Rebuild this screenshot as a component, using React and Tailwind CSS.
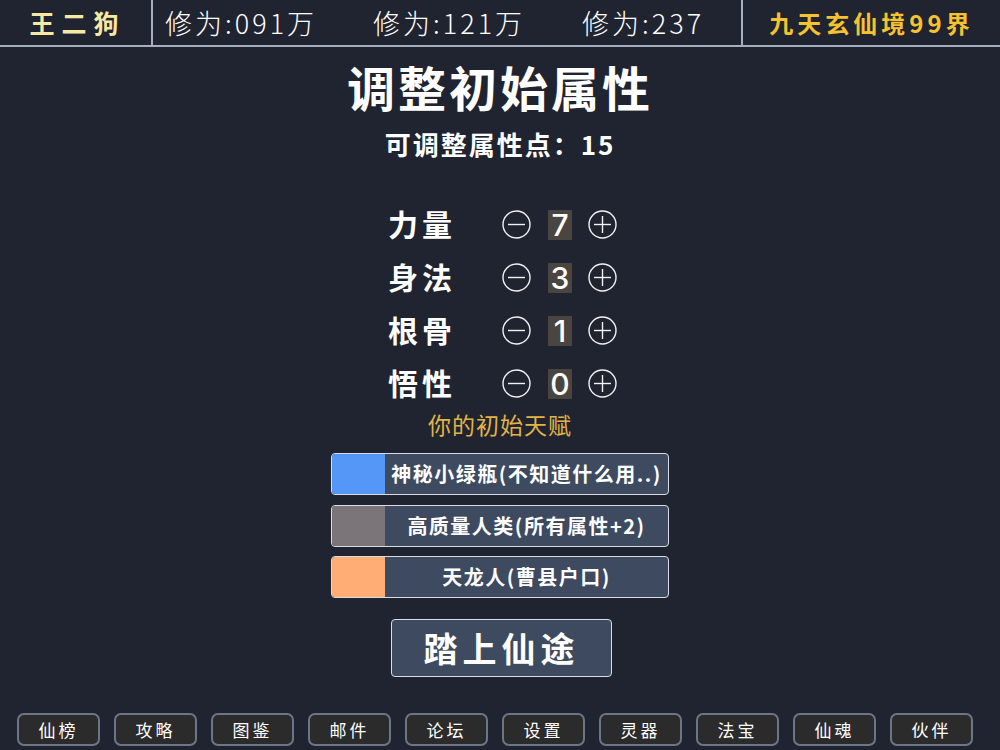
const stats = ['修为:091万', '修为:121万', '修为:237'];

const attrs = [
  { name: '力量', value: 7 },
  { name: '身法', value: 3 },
  { name: '根骨', value: 1 },
  { name: '悟性', value: 0 },
];

const talents = [
  { color: 'bg-[#5597f7]', text: '神秘小绿瓶(不知道什么用..)' },
  { color: 'bg-[#7b7579]', text: '高质量人类(所有属性+2)' },
  { color: 'bg-[#ffad75]', text: '天龙人(曹县户口)' },
];

const navs = ['仙榜', '攻略', '图鉴', '邮件', '论坛', '设置', '灵器', '法宝', '仙魂', '伙伴'];

function CircleBtn({ plus }) {
  return (
    <svg width="29" height="29" viewBox="0 0 29 29" className="shrink-0">
      <circle cx="14.5" cy="14.5" r="13.5" fill="none" stroke="#f2f2f2" strokeWidth="1.4" />
      <line x1="6" y1="14.5" x2="23" y2="14.5" stroke="#f2f2f2" strokeWidth="1.4" />
      {plus && <line x1="14.5" y1="6" x2="14.5" y2="23" stroke="#f2f2f2" strokeWidth="1.4" />}
    </svg>
  );
}

export default function App() {
  return (
    <div className="w-[1000px] h-[750px] overflow-hidden bg-[#1f2430] text-white flex flex-col font-['Noto_Sans_CJK_SC','Noto_Sans',sans-serif]">
      {/* top bar */}
      <div className="h-[47px] shrink-0 flex border-b-2 border-[#a5afbd]">
        <div className="w-[153px] shrink-0 flex items-center justify-center border-r-2 border-[#a5afbd] text-[25px] font-bold tracking-[7px] pl-[4px] text-[#f7e8a3]">
          王二狗
        </div>
        <div className="flex-1 flex items-center pl-[12px] text-[27px] font-light tracking-[3px] leading-none">
          <span className="w-[208px]">{stats[0]}</span>
          <span className="w-[209px]">{stats[1]}</span>
          <span>{stats[2]}</span>
        </div>
        <div className="w-[259px] shrink-0 flex items-center justify-center border-l-2 border-[#a5afbd] text-[24px] font-bold tracking-[4px] text-[#f6c22f]">
          九天玄仙境99界
        </div>
      </div>

      <div className="flex flex-col items-center">
        <h1 className="mt-[11px] h-[56px] flex items-center text-[48px] font-bold tracking-[3px] leading-none">
          调整初始属性
        </h1>
        <p className="mt-[14px] h-[32px] flex items-center text-[26px] font-bold tracking-[2px] leading-none">
          可调整属性点：15
        </p>

        <div className="mt-[38px] ml-[5px] flex flex-col">
          {attrs.map((a) => (
            <div key={a.name} className="h-[53px] flex items-center">
              <span className="w-[114px] text-[30px] font-bold tracking-[4px] leading-none -mt-[3px]">{a.name}</span>
              <CircleBtn />
              <span className="ml-[17px] w-[24px] h-[30px] flex items-center justify-center bg-[#4a4541] text-[30px] font-medium leading-none font-['Inter',sans-serif]">
                {a.value}
              </span>
              <span className="ml-[16px]"><CircleBtn plus /></span>
            </div>
          ))}
        </div>

        <p className="h-[28px] flex items-center text-[23px] tracking-[1px] text-[#e2b447] leading-none">
          你的初始天赋
        </p>

        <div className="mt-[15px] flex flex-col gap-[9.5px]">
          {talents.map((t) => (
            <div key={t.text} className="w-[338px] h-[42px] flex rounded-[4px] border-[1.5px] border-[#d9dde3] bg-[#3d4a60] overflow-hidden">
              <div className={`w-[53px] ${t.color}`} />
              <div className="flex-1 flex items-center justify-center text-[20px] font-bold tracking-[1.5px] leading-none">
                {t.text}
              </div>
            </div>
          ))}
        </div>

        <button className="mt-[21px] ml-[3px] w-[221px] h-[58px] rounded-[4px] border-[1.5px] border-[#d9dde3] bg-[#3d4a60] text-[34px] font-bold tracking-[5px] leading-none">
          踏上仙途
        </button>
      </div>

      <div className="mt-[36px] pl-[17px] flex gap-[14px]">
        {navs.map((n) => (
          <div key={n} className="w-[83px] h-[33px] flex items-center justify-center rounded-[7px] border-2 border-[#6d7586] bg-[#2b2b2b] text-[17px] tracking-[3px] leading-none">
            {n}
          </div>
        ))}
      </div>
    </div>
  );
}
